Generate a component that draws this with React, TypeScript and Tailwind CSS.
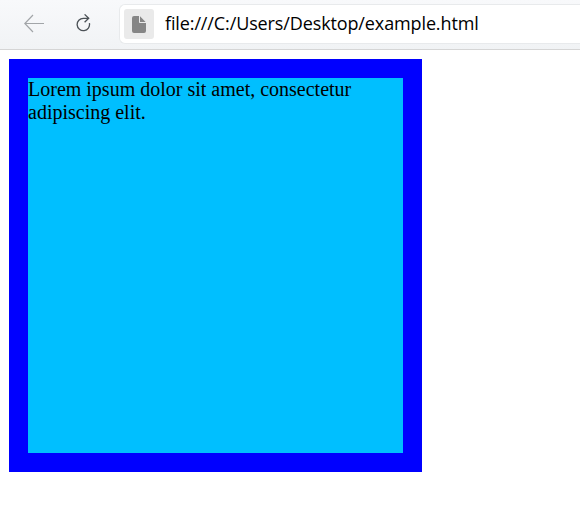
function BackIcon() {
  return (
    <svg width="22" height="19" viewBox="0 0 22 19" fill="none" stroke="#a2a5a8" strokeWidth="1.2">
      <path d="M20 9.5H1M9 1 .8 9.5 9 18" />
    </svg>
  );
}

function ReloadIcon() {
  return (
    <svg width="15" height="19" viewBox="0 0 15 19" fill="none" stroke="#4b5156" strokeWidth="1.3">
      <path d="M13.4 9.2A6.2 6.2 0 1 1 7.4 4.3H12.6M8.6 .4 12.7 4.3 8.6 8.2" />
    </svg>
  );
}

function FileIcon() {
  return (
    <svg width="14" height="17" viewBox="0 0 14 17" fill="#868686">
      <path d="M2 0H7V6.2Q7 7 7.8 7H14V15Q14 17 12 17H2Q0 17 0 15V2Q0 0 2 0Z" />
      <path d="M8 .3 13.6 6H8Z" />
    </svg>
  );
}

export default function App() {
  return (
    <div className="h-[521px] w-[580px] overflow-hidden bg-white">
      <header className="flex h-[50px] items-start border-b border-[#d5d5d5] bg-linear-to-b from-[#f8f9fb] to-[#f1f3f5]">
        <button aria-label="Back" className="mt-[14px] ml-6">
          <BackIcon />
        </button>
        <button aria-label="Reload" className="mt-[14px] ml-[30px]">
          <ReloadIcon />
        </button>
        <div className="mt-1 ml-7 flex h-10 flex-1 items-start rounded-l-[6px] border border-r-0 border-[#e8eaec] bg-white pt-1 pl-[4px]">
          <span className="flex h-[30px] w-[30px] items-center justify-center rounded-[3px] bg-[#eaeaea]">
            <FileIcon />
          </span>
          <span className="ml-[11px] font-['Open_Sans','Noto_Sans',sans-serif] text-[18px] leading-[28px] tracking-[-0.12px] whitespace-nowrap text-black">
            file:///C:/Users/Desktop/example.html
          </span>
        </div>
      </header>
      <main className="pt-[9px] pl-[9px]">
        <div className="h-[413px] w-[413px] border-[19px] border-[#0000ff] bg-[#00bfff] font-['Liberation_Serif',serif] text-[20px] leading-[23px] text-black">
          Lorem ipsum dolor sit amet, consectetur adipiscing elit.
        </div>
      </main>
    </div>
  );
}
